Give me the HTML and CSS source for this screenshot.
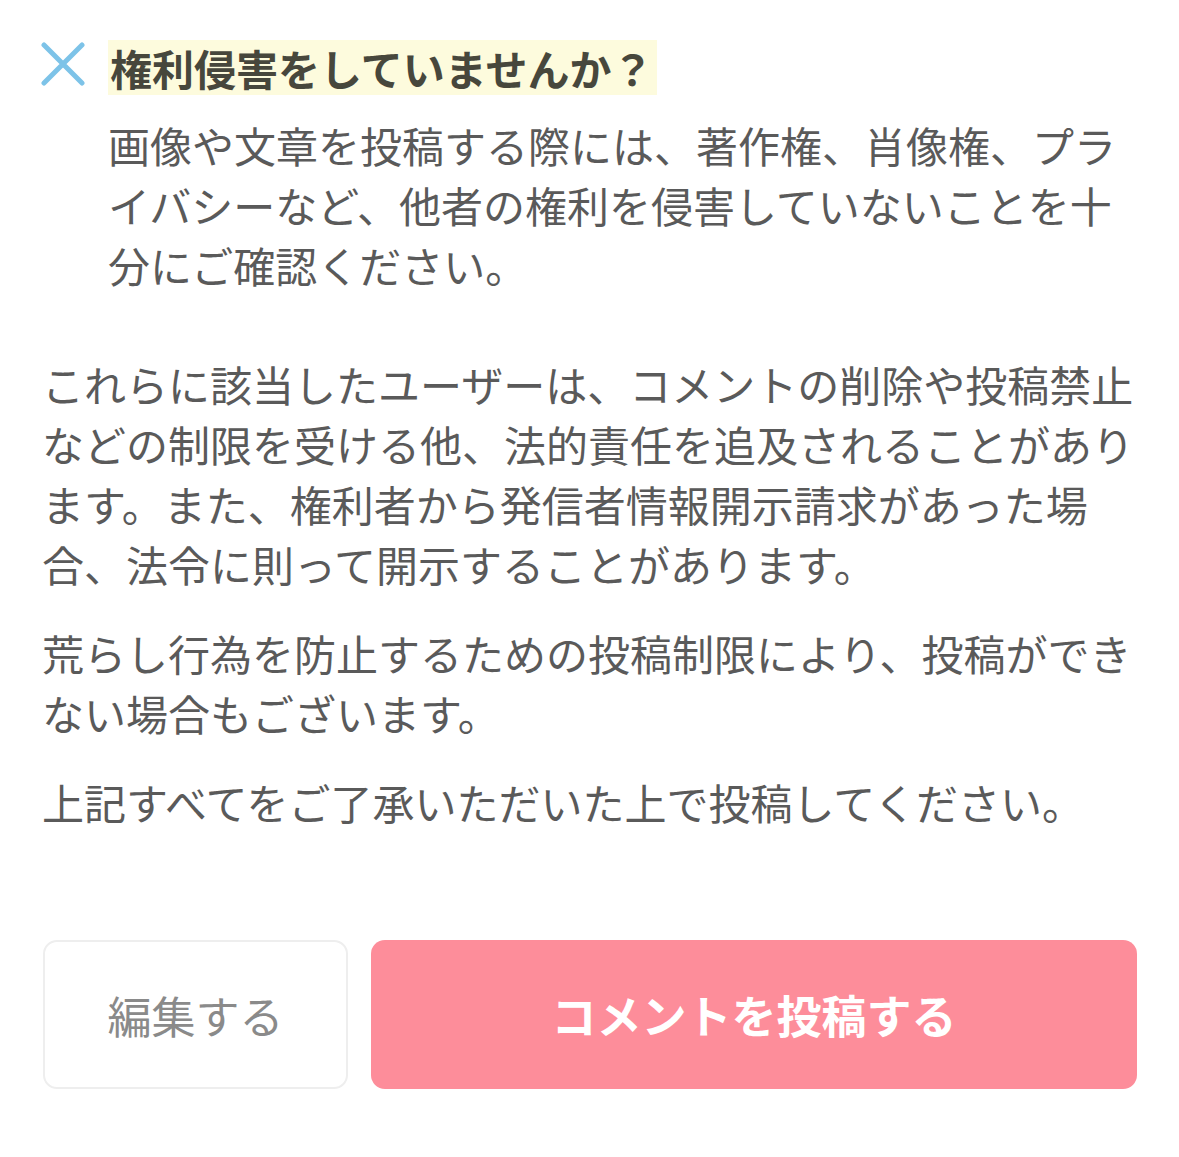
FILE: index.html
```html
<!DOCTYPE html>
<html lang="ja">
<head>
<meta charset="utf-8">
<link rel="stylesheet" href="styles.css">
</head>
<body>
<div class="page">
  <div class="notice">
    <svg class="notice-icon" viewBox="0 0 44 44" width="44" height="44" aria-hidden="true">
      <path d="M3 3 L41 41 M41 3 L3 41" stroke="#7dc3e8" stroke-width="5" stroke-linecap="round" fill="none"/>
    </svg>
    <div class="notice-body">
      <h2 class="notice-title"><span class="mark">権利侵害をしていませんか？</span></h2>
      <p class="notice-text">画像や文章を投稿する際には、著作権、肖像権、プラ<br>イバシーなど、他者の権利を侵害していないことを十<br>分にご確認ください。</p>
    </div>
  </div>
  <p class="para para-first">これらに該当したユーザーは、コメントの削除や投稿禁止<br>などの制限を受ける他、法的責任を追及されることがあり<br>ます。また、権利者から発信者情報開示請求があった場<br>合、法令に則って開示することがあります。</p>
  <p class="para">荒らし行為を防止するための投稿制限により、投稿ができ<br>ない場合もございます。</p>
  <p class="para">上記すべてをご了承いただいた上で投稿してください。</p>
  <div class="actions">
    <button class="btn btn-edit" type="button">編集する</button>
    <button class="btn btn-post" type="button">コメントを投稿する</button>
  </div>
</div>
</body>
</html>
```

FILE: styles.css
```css
html, body {
  margin: 0;
  padding: 0;
  background: #ffffff;
}
body {
  font-family: "Noto Sans CJK JP", "Noto Sans", sans-serif;
  color: #5a5a5a;
}
.page {
  padding: 40px 42px 0 42px;
  width: 1095px;
}
.notice {
  display: flex;
  align-items: flex-start;
}
.notice-icon {
  flex: none;
  margin-top: 2px;
  margin-left: -1px;
  display: block;
}
.notice-body {
  margin-left: 23px;
  flex: 1;
}
.notice-title {
  margin: 0;
  font-size: 42px;
  font-weight: 700;
  line-height: 55px;
  color: #47473c;
}
.notice-title .mark {
  display: inline-block;
  background: #fdfbdd;
  padding: 0 4px 0 2px;
  margin-left: 0;
}
.notice-text {
  margin: 20px 0 0;
  font-size: 42px;
  line-height: 60px;
  color: #5a5a5a;
}
.para {
  margin: 29px 0 0;
  font-size: 42px;
  line-height: 60px;
  color: #5a5a5a;
  white-space: nowrap;
}
.para-first {
  margin-top: 59px;
}
.actions {
  display: flex;
  gap: 23px;
  margin-top: 108px;
  margin-left: 1px;
}
.btn {
  height: 149px;
  border-radius: 14px;
  font-family: "Noto Sans CJK JP", "Noto Sans", sans-serif;
  cursor: pointer;
  display: flex;
  align-items: center;
  justify-content: center;
  padding: 0;
}
.btn-edit {
  width: 305px;
  background: #ffffff;
  border: 2px solid #eeeeee;
  color: #8a8a8a;
  font-weight: 400;
  font-size: 44px;
}
.btn-post {
  width: 766px;
  background: #fd8d9a;
  border: none;
  color: #ffffff;
  font-weight: 700;
  font-size: 45px;
}
```
